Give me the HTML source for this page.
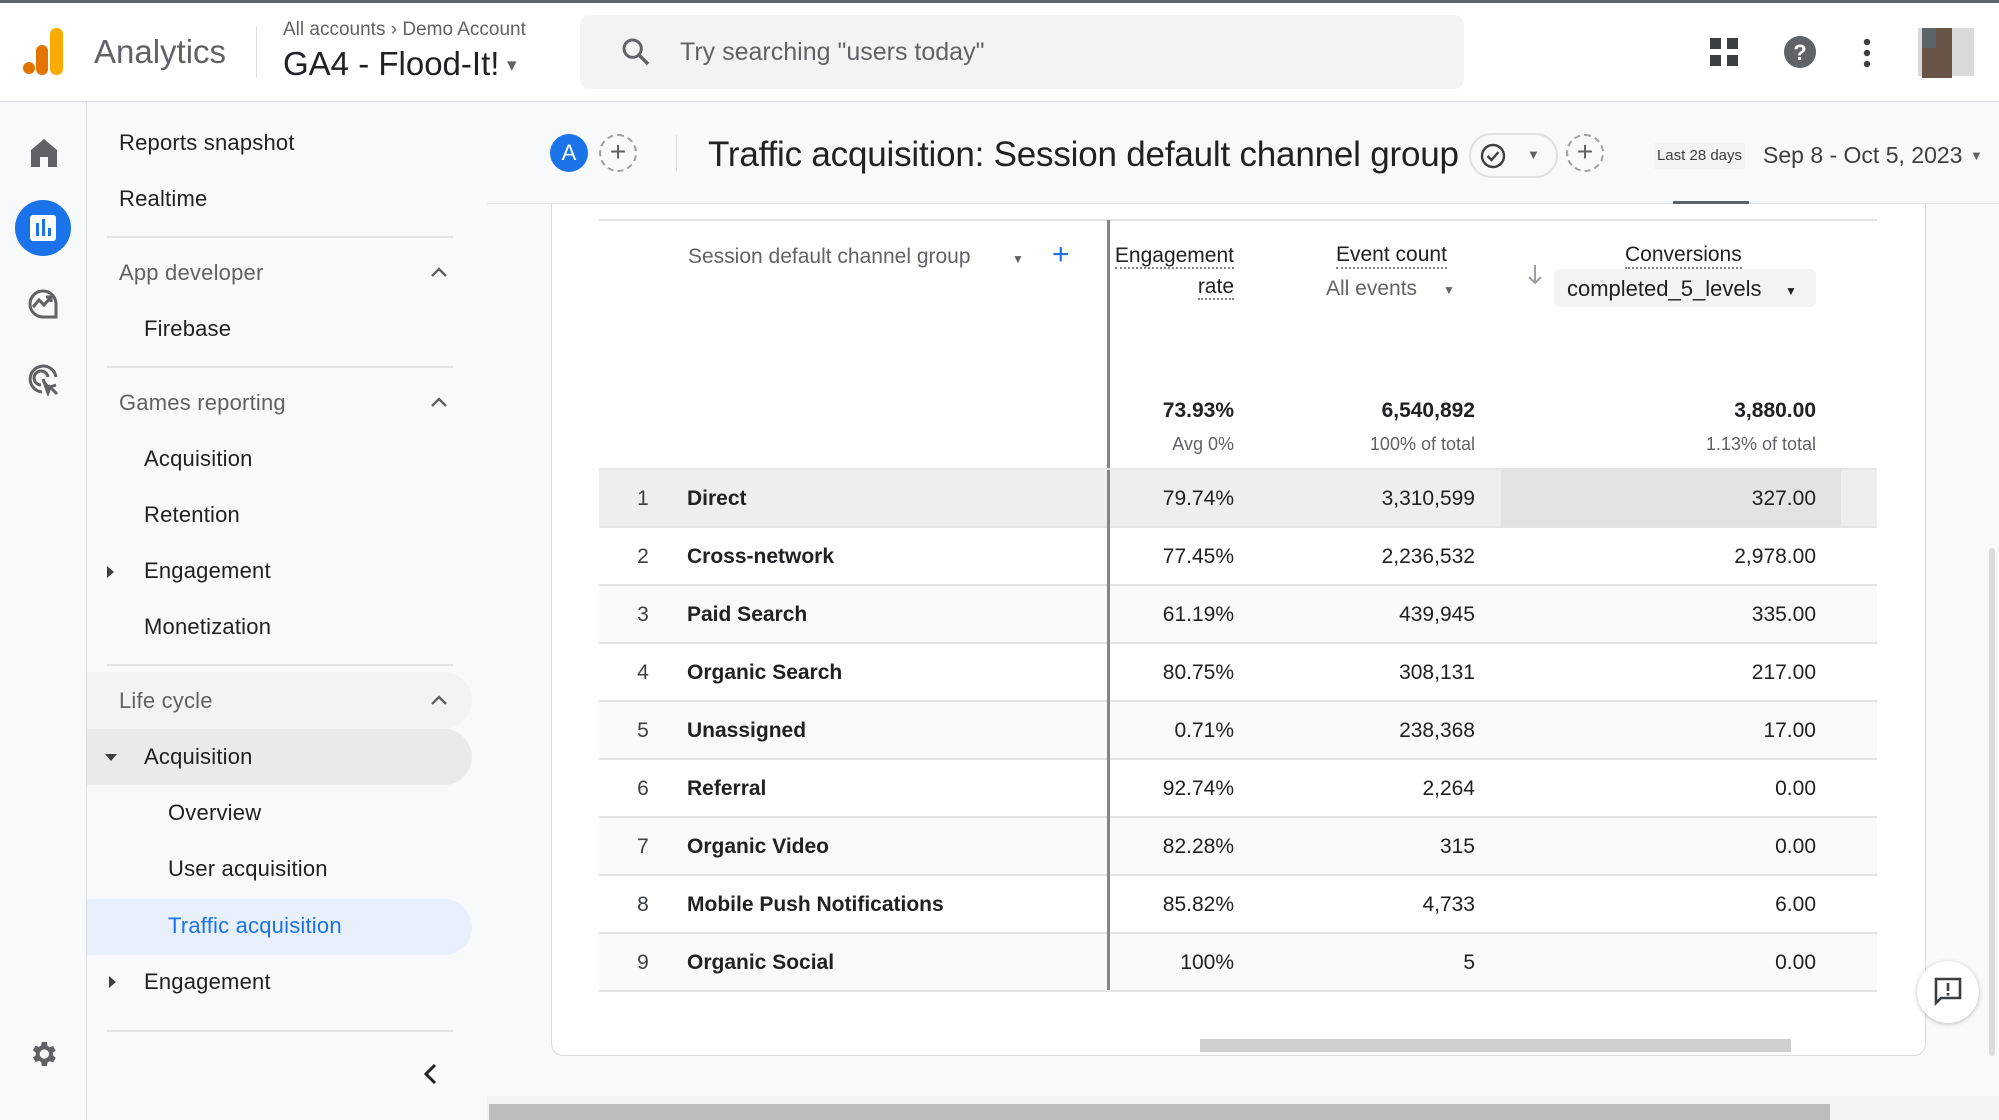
<!DOCTYPE html>
<html><head><meta charset="utf-8"><style>
*{margin:0;padding:0;box-sizing:border-box}
body{width:1999px;height:1120px;overflow:hidden;background:#f8f9fa;font-family:"Liberation Sans",Arial,sans-serif;color:#202124;position:relative}
.a{position:absolute;white-space:nowrap}
.r{text-align:right}
.sb{font-size:22px;letter-spacing:0.2px;color:#202124}
.g{color:#5f6368}
.row{position:absolute;left:599px;width:1278px;height:58px;border-bottom:2px solid #e3e4e6}
.row span{position:absolute;top:17px;font-size:21px}
.n{left:30px;width:28px;text-align:center;color:#3c4043}
.nm{left:88px;font-weight:bold;color:#202124}
.c1{right:643px;text-align:right}
.c2{right:402px;text-align:right}
.c3{right:61px;text-align:right}
</style></head><body>
<div class="a" style="left:0;top:0;width:1999px;height:3px;background:#5f6368"></div>
<div class="a" style="left:0;top:3px;width:1999px;height:99px;background:#fff;border-bottom:1px solid #dadce0"></div>
<svg class="a" style="left:22px;top:28px" width="44" height="48" viewBox="0 0 44 48"><rect x="28" y="0" width="13" height="47" rx="6" fill="#f9ab00"/><rect x="14" y="17" width="12" height="30" rx="6" fill="#e37400"/><circle cx="7" cy="40" r="6" fill="#e37400"/></svg>
<div class="a g" style="left:94px;top:33px;font-size:33px">Analytics</div>
<div class="a" style="left:256px;top:27px;width:1px;height:50px;background:#dadce0"></div>
<div class="a g" style="left:283px;top:19px;font-size:19px">All accounts &#x203A; Demo Account</div>
<div class="a" style="left:283px;top:45px;font-size:33px;color:#202124">GA4 - Flood-It!<span style="font-size:16px;color:#5f6368;vertical-align:middle"> ▼</span></div>
<div class="a" style="left:580px;top:15px;width:884px;height:74px;background:#f1f3f4;border-radius:10px"></div>
<svg class="a" style="left:620px;top:36px" width="32" height="32" viewBox="0 0 24 24"><circle cx="9.5" cy="9.5" r="6.5" fill="none" stroke="#5f6368" stroke-width="2.2"/><path d="M14.5 14.5L21 21" stroke="#5f6368" stroke-width="2.6"/></svg>
<div class="a g" style="left:680px;top:38px;font-size:25px">Try searching "users today"</div>
<svg class="a" style="left:1708px;top:36px" width="32" height="32" viewBox="0 0 32 32" fill="#3c4043"><rect x="2" y="2" width="11" height="11"/><rect x="19" y="2" width="11" height="11"/><rect x="2" y="19" width="11" height="11"/><rect x="19" y="19" width="11" height="11"/></svg>
<svg class="a" style="left:1783px;top:35px" width="34" height="34" viewBox="0 0 34 34"><circle cx="17" cy="17" r="16" fill="#5f6368"/><text x="17" y="25" text-anchor="middle" font-family="Liberation Sans" font-weight="bold" font-size="22" fill="#fff">?</text></svg>
<svg class="a" style="left:1862px;top:38px" width="10" height="30"><circle cx="5" cy="4" r="3.2" fill="#3c4043"/><circle cx="5" cy="15" r="3.2" fill="#3c4043"/><circle cx="5" cy="26" r="3.2" fill="#3c4043"/></svg>
<div class="a" style="left:1918px;top:28px;width:56px;height:48px;background:#d9d9d9"></div>
<div class="a" style="left:1922px;top:28px;width:30px;height:50px;background:#6a5448"></div>
<div class="a" style="left:1922px;top:28px;width:14px;height:20px;background:#5d6468"></div>
<div class="a" style="left:86px;top:102px;width:1px;height:1018px;background:#dadce0"></div>
<svg class="a" style="left:30px;top:138px" width="28" height="30" viewBox="0 0 28 30"><path d="M14 1L1 12V29H10V19H18V29H27V12Z" fill="#5f6368"/></svg>
<div class="a" style="left:15px;top:200px;width:56px;height:56px;border-radius:50%;background:#1a73e8"></div>
<div class="a" style="left:30px;top:215px;width:26px;height:26px;border-radius:3px;background:#fff"></div>
<div class="a" style="left:36px;top:223px;width:3px;height:13px;background:#1a73e8"></div>
<div class="a" style="left:42px;top:219px;width:3px;height:17px;background:#1a73e8"></div>
<div class="a" style="left:48px;top:228px;width:3px;height:8px;background:#1a73e8"></div>
<svg class="a" style="left:26px;top:287px" width="34" height="34" viewBox="0 0 34 34" fill="none" stroke="#5f6368" stroke-width="3"><path d="M30 17A13 13 0 1 0 17 30H30Z"/><path d="M7 20L13 13L18 18L25 10M20 10H25V15"/></svg>
<svg class="a" style="left:26px;top:362px" width="34" height="34" viewBox="0 0 34 34" fill="none" stroke="#5f6368" stroke-width="3"><path d="M16 30A13 13 0 1 1 30 15"/><path d="M15 23A7 7 0 1 1 22 15"/><path d="M17 17L22 31L24 25L31 32M24 25L30 23Z" fill="#5f6368"/></svg>
<svg class="a" style="left:27px;top:1038px" width="32" height="32" viewBox="0 0 24 24"><path fill="#5f6368" d="M19.4 13a7.5 7.5 0 0 0 0-2l2.1-1.6-2-3.5-2.5 1a7 7 0 0 0-1.7-1L15 3h-4l-.4 2.7a7 7 0 0 0-1.7 1l-2.5-1-2 3.5L6.6 11a7.5 7.5 0 0 0 0 2l-2.1 1.6 2 3.5 2.5-1a7 7 0 0 0 1.7 1L11 21h4l.4-2.7a7 7 0 0 0 1.7-1l2.5 1 2-3.5zM13 15.5A3.5 3.5 0 1 1 13 8.5a3.5 3.5 0 0 1 0 7z"/></svg>
<div class="a sb" style="left:119px;top:130px">Reports snapshot</div>
<div class="a sb" style="left:119px;top:186px">Realtime</div>
<div class="a" style="left:107px;top:236px;width:346px;height:2px;background:#e3e4e6"></div>
<div class="a sb g" style="left:119px;top:260px">App developer</div>
<svg class="a" style="left:430px;top:266px" width="18" height="12"><path d="M2 10L9 3L16 10" fill="none" stroke="#5f6368" stroke-width="2.4"/></svg>
<div class="a sb" style="left:144px;top:316px">Firebase</div>
<div class="a" style="left:107px;top:366px;width:346px;height:2px;background:#e3e4e6"></div>
<div class="a sb g" style="left:119px;top:390px">Games reporting</div>
<svg class="a" style="left:430px;top:396px" width="18" height="12"><path d="M2 10L9 3L16 10" fill="none" stroke="#5f6368" stroke-width="2.4"/></svg>
<div class="a sb" style="left:144px;top:446px">Acquisition</div>
<div class="a sb" style="left:144px;top:502px">Retention</div>
<div class="a" style="left:107px;top:566px;width:0;height:0;border-top:6px solid transparent;border-bottom:6px solid transparent;border-left:7px solid #3c4043"></div>
<div class="a sb" style="left:144px;top:558px">Engagement</div>
<div class="a sb" style="left:144px;top:614px">Monetization</div>
<div class="a" style="left:107px;top:664px;width:346px;height:2px;background:#e3e4e6"></div>
<div class="a" style="left:87px;top:672px;width:385px;height:57px;background:#f1f3f4;border-radius:0 29px 29px 0"></div>
<div class="a sb g" style="left:119px;top:688px">Life cycle</div>
<svg class="a" style="left:430px;top:694px" width="18" height="12"><path d="M2 10L9 3L16 10" fill="none" stroke="#5f6368" stroke-width="2.4"/></svg>
<div class="a" style="left:87px;top:729px;width:385px;height:56px;background:#e8eaed;border-radius:0 28px 28px 0"></div>
<div class="a" style="left:105px;top:754px;width:0;height:0;border-left:6px solid transparent;border-right:6px solid transparent;border-top:7px solid #3c4043"></div>
<div class="a sb" style="left:144px;top:744px">Acquisition</div>
<div class="a sb" style="left:168px;top:800px">Overview</div>
<div class="a sb" style="left:168px;top:856px">User acquisition</div>
<div class="a" style="left:87px;top:899px;width:385px;height:56px;background:#e8f0fe;border-radius:0 28px 28px 0"></div>
<div class="a sb" style="left:168px;top:913px;color:#1a73e8">Traffic acquisition</div>
<div class="a" style="left:109px;top:976px;width:0;height:0;border-top:6px solid transparent;border-bottom:6px solid transparent;border-left:7px solid #3c4043"></div>
<div class="a sb" style="left:144px;top:969px">Engagement</div>
<div class="a" style="left:107px;top:1030px;width:346px;height:2px;background:#e3e4e6"></div>
<div class="a" style="left:87px;top:1032px;width:398px;height:88px;background:#f8f9fa"></div>
<svg class="a" style="left:421px;top:1062px" width="18" height="24" viewBox="0 0 18 24"><path d="M14 3L5 12L14 21" fill="none" stroke="#202124" stroke-width="3"/></svg>
<div class="a" style="left:487px;top:203px;width:1512px;height:1px;background:#e0e0e0"></div>
<div class="a" style="left:550px;top:134px;width:38px;height:38px;border-radius:50%;background:#1a73e8;color:#fff;font-size:22px;text-align:center;line-height:38px">A</div>
<div class="a" style="left:599px;top:134px;width:38px;height:38px;border-radius:50%;border:2px dashed #9aa0a6;color:#5f6368;font-size:28px;text-align:center;line-height:32px">+</div>
<div class="a" style="left:676px;top:135px;width:1px;height:36px;background:#dadce0"></div>
<div class="a" style="left:708px;top:135px;font-size:35px;letter-spacing:-0.2px;color:#202124">Traffic acquisition: Session default channel group</div>
<div class="a" style="left:1469px;top:133px;width:89px;height:45px;border:2px solid #e0e0e0;border-radius:23px"></div>
<svg class="a" style="left:1479px;top:142px" width="28" height="28" viewBox="0 0 28 28" fill="none" stroke="#3c4043" stroke-width="2.4"><circle cx="14" cy="14" r="11"/><path d="M8.5 14L12.5 18L19.5 10"/></svg>
<div class="a g" style="left:1527px;top:147px;font-size:13px">▼</div>
<div class="a" style="left:1566px;top:134px;width:38px;height:38px;border-radius:50%;border:2px dashed #9aa0a6;color:#5f6368;font-size:28px;text-align:center;line-height:32px">+</div>
<div class="a" style="left:1654px;top:143px;width:91px;height:26px;background:#f1f3f4;font-size:15px;line-height:26px;text-align:center;color:#3c4043">Last 28 days</div>
<div class="a" style="left:1763px;top:142px;font-size:23px;color:#3c4043">Sep 8 - Oct 5, 2023</div>
<div class="a g" style="left:1970px;top:148px;font-size:13px">▼</div>
<div class="a" style="left:1673px;top:201px;width:76px;height:3px;background:#5f6368"></div>
<div class="a" style="left:551px;top:204px;width:1375px;height:852px;background:#fff;border:1px solid #dadce0;border-top:none;border-radius:0 0 12px 12px"></div>
<div class="a" style="left:599px;top:219px;width:1278px;height:2px;background:#e3e4e6"></div>
<div class="a" style="left:1107px;top:220px;width:3px;height:770px;background:#80868b"></div>
<div class="a g" style="left:688px;top:245px;font-size:21px">Session default channel group</div>
<div class="a g" style="left:1012px;top:252px;font-size:12px">▼</div>
<div class="a" style="left:1052px;top:238px;font-size:30px;color:#1a73e8">+</div>
<div class="a r" style="left:1100px;width:134px;top:240px;font-size:21px;line-height:31px;color:#202124"><span style="border-bottom:2px dotted #80868b">Engagement</span><br><span style="border-bottom:2px dotted #80868b">rate</span></div>
<div class="a" style="left:1336px;top:243px;font-size:21px;color:#202124;border-bottom:2px dotted #80868b">Event count</div>
<div class="a g" style="left:1326px;top:277px;font-size:21px">All events</div>
<div class="a g" style="left:1443px;top:283px;font-size:12px">▼</div>
<svg class="a" style="left:1527px;top:264px" width="16" height="22" viewBox="0 0 16 22"><path d="M8 1V19M2 13L8 19L14 13" fill="none" stroke="#9aa0a6" stroke-width="2"/></svg>
<div class="a" style="left:1625px;top:243px;font-size:21px;color:#202124;border-bottom:2px dotted #80868b">Conversions</div>
<div class="a" style="left:1554px;top:269px;width:262px;height:38px;background:#f1f3f4;border-radius:6px"></div>
<div class="a" style="left:1567px;top:276px;font-size:22px;color:#202124">completed_5_levels</div>
<div class="a" style="left:1785px;top:284px;font-size:12px;color:#202124">▼</div>
<div class="a r" style="left:1100px;width:134px;top:399px;font-size:21px;font-weight:bold;color:#202124">73.93%</div>
<div class="a r" style="left:1300px;width:175px;top:399px;font-size:21px;font-weight:bold;color:#202124">6,540,892</div>
<div class="a r" style="left:1600px;width:216px;top:399px;font-size:21px;font-weight:bold;color:#202124">3,880.00</div>
<div class="a r g" style="left:1100px;width:134px;top:434px;font-size:18px">Avg 0%</div>
<div class="a r g" style="left:1300px;width:175px;top:434px;font-size:18px">100% of total</div>
<div class="a r g" style="left:1600px;width:216px;top:434px;font-size:18px">1.13% of total</div>
<div class="a" style="left:599px;top:468px;width:1278px;height:2px;background:#e3e4e6"></div>
<div class="row" style="top:470px;background:#eceef0"><div class="a" style="left:902px;top:0;width:340px;height:56px;background:#e1e3e5"></div><span class="n">1</span><span class="nm">Direct</span><span class="c1">79.74%</span><span class="c2">3,310,599</span><span class="c3">327.00</span></div>
<div class="row" style="top:528px;background:#fff"><span class="n">2</span><span class="nm">Cross-network</span><span class="c1">77.45%</span><span class="c2">2,236,532</span><span class="c3">2,978.00</span></div>
<div class="row" style="top:586px;background:#f8f9fa"><span class="n">3</span><span class="nm">Paid Search</span><span class="c1">61.19%</span><span class="c2">439,945</span><span class="c3">335.00</span></div>
<div class="row" style="top:644px;background:#fff"><span class="n">4</span><span class="nm">Organic Search</span><span class="c1">80.75%</span><span class="c2">308,131</span><span class="c3">217.00</span></div>
<div class="row" style="top:702px;background:#f8f9fa"><span class="n">5</span><span class="nm">Unassigned</span><span class="c1">0.71%</span><span class="c2">238,368</span><span class="c3">17.00</span></div>
<div class="row" style="top:760px;background:#fff"><span class="n">6</span><span class="nm">Referral</span><span class="c1">92.74%</span><span class="c2">2,264</span><span class="c3">0.00</span></div>
<div class="row" style="top:818px;background:#f8f9fa"><span class="n">7</span><span class="nm">Organic Video</span><span class="c1">82.28%</span><span class="c2">315</span><span class="c3">0.00</span></div>
<div class="row" style="top:876px;background:#fff"><span class="n">8</span><span class="nm">Mobile Push Notifications</span><span class="c1">85.82%</span><span class="c2">4,733</span><span class="c3">6.00</span></div>
<div class="row" style="top:934px;background:#f8f9fa"><span class="n">9</span><span class="nm">Organic Social</span><span class="c1">100%</span><span class="c2">5</span><span class="c3">0.00</span></div>
<div class="a" style="left:1107px;top:470px;width:3px;height:520px;background:#80868b"></div>
<div class="a" style="left:1200px;top:1039px;width:591px;height:13px;background:#cfcfcf"></div>
<div class="a" style="left:1917px;top:961px;width:62px;height:62px;border-radius:50%;background:#fff;box-shadow:0 1px 4px rgba(0,0,0,.25)"></div>
<svg class="a" style="left:1933px;top:976px" width="30" height="30" viewBox="0 0 30 30"><path d="M3 3H27V22H8L3 27Z" fill="none" stroke="#3c4043" stroke-width="2.6"/><rect x="13.7" y="7" width="2.6" height="8" fill="#3c4043"/><rect x="13.7" y="17" width="2.6" height="2.6" fill="#3c4043"/></svg>
<div class="a" style="left:1989px;top:548px;width:6px;height:508px;background:#dadce0;border-radius:3px"></div>
<div class="a" style="left:487px;top:1096px;width:1512px;height:24px;background:#f1f3f4"></div>
<div class="a" style="left:489px;top:1104px;width:1341px;height:16px;background:#bdbdbd"></div>
</body></html>
